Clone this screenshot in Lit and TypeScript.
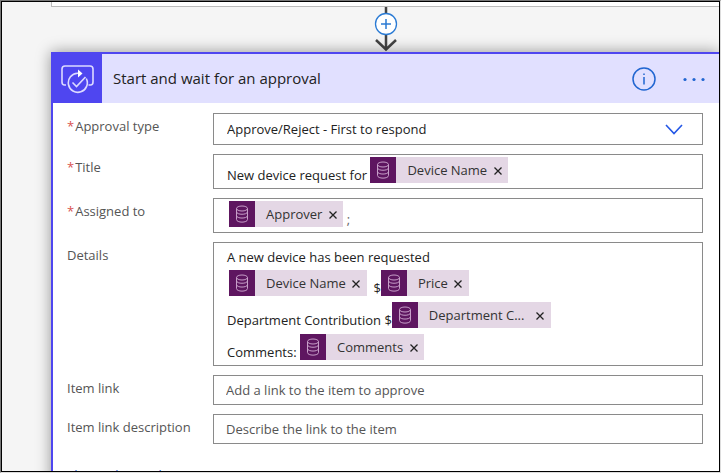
import { LitElement, html, css, svg } from "lit";
import { customElement, property } from "lit/decorators.js";

const database = svg`
  <ellipse cx="7" cy="3.5" rx="5.5" ry="2.5"></ellipse>
  <path d="M1.5 3.5V14.5C1.5 18 12.5 18 12.5 14.5V3.5"></path>
  <path d="M1.5 7C2 10 12 10 12.5 7M1.5 10.8C2 13.8 12 13.8 12.5 10.8"></path>`;

@customElement("field-token")
export class FieldToken extends LitElement {
  @property() label = "";
  @property({ type: Boolean }) clipped = false;

  static styles = css`
    :host {
      display: inline-flex;
      align-items: center;
      height: 26px;
      background: #e4d7e5;
      color: #333;
      vertical-align: top;
    }
    .badge {
      display: grid;
      place-items: center;
      width: 26px;
      height: 26px;
      background: #5e1660;
      margin-right: 11px;
    }
    .badge svg {
      width: 14px;
      height: 18px;
      fill: none;
      stroke: #c79fc9;
      stroke-width: 1;
    }
    .label {
      white-space: nowrap;
    }
    .label.clipped {
      width: 101px;
    }
    button {
      display: grid;
      place-items: center;
      width: 21px;
      height: 26px;
      padding: 0;
      border: 0;
      background: none;
    }
    button svg {
      width: 8px;
      height: 8px;
      margin-top: 2px;
      stroke: #222;
      stroke-width: 1.3;
    }
  `;

  render() {
    return html`
      <span class="badge"><svg viewBox="0 0 14 18">${database}</svg></span>
      <span class="label ${this.clipped ? "clipped" : ""}">${this.label}</span>
      <button aria-label="Remove ${this.label}">
        <svg viewBox="0 0 8 8"><path d="M0.5 0.5L7.5 7.5M7.5 0.5L0.5 7.5"></path></svg>
      </button>
    `;
  }
}

@customElement("app-root")
export class AppRoot extends LitElement {
  static styles = css`
    :host {
      display: block;
      box-sizing: border-box;
      height: 100vh;
      border: 1px solid #777;
      border-right-color: #ddd;
      border-bottom-color: #ddd;
      font: 13px/18px "Open Sans", "Noto Sans", sans-serif;
      color: #222;
    }
    * {
      box-sizing: border-box;
    }
    .frame {
      height: 100%;
      overflow: hidden;
      border: 1px solid #000;
      background: #f5f5f5;
      display: flex;
      flex-direction: column;
    }
    .previous {
      flex: none;
      height: 5px;
      margin-left: 49px;
      border: 1px solid #bbb;
      border-top: 0;
      border-right: 0;
      background: #fff;
    }
    .connector {
      flex: none;
      display: flex;
      justify-content: center;
      height: 45px;
      margin-left: 50px;
    }
    .connector button {
      width: 26px;
      height: 45px;
      padding: 0;
      border: 0;
      background: none;
    }
    .connector svg {
      display: block;
      width: 26px;
      height: 45px;
      fill: none;
    }
    .card {
      flex: none;
      margin-left: 49px;
      border: 2px solid #4f46f0;
      border-right: 0;
      border-bottom: 0;
      background: #fff;
      box-shadow: 0 0 14px rgba(0, 0, 0, 0.4);
    }
    .header {
      display: flex;
      align-items: center;
      height: 49px;
      padding-right: 12px;
      background: #e1e0ff;
    }
    .logo {
      display: grid;
      place-items: center;
      width: 49px;
      height: 49px;
      padding-right: 1px;
      background: #4f46f0;
    }
    .logo svg {
      width: 34px;
      height: 30px;
      fill: none;
      stroke: #dcdaff;
      stroke-width: 1.6;
    }
    h1 {
      flex: 1;
      margin: 0 0 2px 11px;
      font-size: 15px;
      line-height: 20px;
      font-weight: 400;
    }
    .icon {
      padding: 0;
      border: 0;
      background: none;
      display: grid;
      place-items: center;
      width: 26px;
      height: 26px;
    }
    .icon + .icon {
      margin-left: 24px;
    }
    .icon svg {
      width: 26px;
      height: 26px;
    }
    form {
      display: grid;
      grid-template-columns: 146px 1fr;
      row-gap: 9px;
      padding: 10px 16px 0 14px;
    }
    .name {
      padding-top: 4px;
      color: #555;
    }
    .required::before {
      content: "*";
      color: #d9534f;
      margin-right: 1px;
    }
    .box {
      min-width: 0;
      width: 100%;
      border: 1px solid #8a8a8a;
      background: #fff;
      padding: 0 13px;
    }
    .picker {
      position: relative;
    }
    select.box {
      display: block;
      height: 32px;
      appearance: none;
      border-radius: 0;
      font: inherit;
      color: inherit;
    }
    .picker svg {
      position: absolute;
      right: 20px;
      top: 11px;
      width: 18px;
      height: 11px;
      pointer-events: none;
    }
    .line {
      display: flex;
      align-items: flex-start;
    }
    .line > span {
      padding-top: 9px;
      white-space: pre;
    }
    .single {
      height: 35px;
      padding-top: 2px;
    }
    .details {
      height: 124px;
      padding-top: 5px;
    }
    .details .line {
      height: 32px;
    }
    .details .line.first {
      height: 22px;
    }
    .details .line.first > span {
      padding-top: 0;
    }
    .tail {
      color: #666;
    }
    .people {
      padding-left: 15px;
    }
    .indent {
      padding-left: 2px;
    }
    input.box {
      display: block;
      height: 30px;
      padding: 0 12px;
      border-radius: 0;
      font: inherit;
    }
    input.box::placeholder {
      color: #555;
      opacity: 1;
    }
    .more {
      display: block;
      margin: 22px 14px 0;
      color: #2a5bd7;
      text-decoration: none;
    }
  `;

  render() {
    return html`
      <main class="frame">
        <div class="previous"></div>
        <div class="connector">
          <button aria-label="Insert a new step">
            <svg viewBox="0 0 26 45">
              <path d="M13 0V42M3 33L13 42.5L23 33" stroke="#444" stroke-width="2.5"></path>
              <circle cx="13" cy="17" r="10.5" fill="#fff" stroke="#2b7bd4" stroke-width="1.3"></circle>
              <path d="M13 12V22M8 17H18" stroke="#2b7bd4" stroke-width="1.5"></path>
            </svg>
          </button>
        </div>
        <section class="card">
          <header class="header">
            <span class="logo">
              <svg viewBox="0 0 34 30">
                <path d="M6 21H4.5Q2 21 2 18V5Q2 2 5 2H30Q33 2 33 5V18Q33 21 30.5 21H28.5"></path>
                <path d="M19.5 9.3H17.5A9.5 9.5 0 1 0 26.3 14.5M12.5 18.5L16.5 22.5L25.5 13"></path>
                <path d="M18 5.5L22.5 9.5L18 13.5Z" fill="#fff" stroke="none"></path>
              </svg>
            </span>
            <h1>Start and wait for an approval</h1>
            <button class="icon" aria-label="Information">
              <svg viewBox="0 0 26 26" fill="none" stroke="#2166d1">
                <circle cx="13" cy="13" r="11" stroke-width="1.5"></circle>
                <path d="M13 11V18.5M13 7.5V9" stroke-width="1.5"></path>
              </svg>
            </button>
            <button class="icon" aria-label="More commands">
              <svg viewBox="0 0 26 26" fill="#2166d1">
                <circle cx="4" cy="13.5" r="1.6"></circle>
                <circle cx="13" cy="13.5" r="1.6"></circle>
                <circle cx="22" cy="13.5" r="1.6"></circle>
              </svg>
            </button>
          </header>
          <form>
            <label class="name required" for="type">Approval type</label>
            <div class="picker">
              <select class="box" id="type"><option>Approve/Reject - First to respond</option></select>
              <svg viewBox="0 0 18 11" fill="none" stroke="#2457e6" stroke-width="1.6"><path d="M1 1L9 9.5L17 1"></path></svg>
            </div>
            <span class="name required" id="title">Title</span>
            <div class="box single line" role="textbox" aria-labelledby="title">
              <span>New device request for </span><field-token label="Device Name"></field-token>
            </div>
            <span class="name required" id="assigned">Assigned to</span>
            <div class="box single line people" role="textbox" aria-labelledby="assigned">
              <field-token label="Approver"></field-token><span class="tail"> ;</span>
            </div>
            <span class="name" id="details">Details</span>
            <div class="box details" role="textbox" aria-labelledby="details" aria-multiline="true">
              <div class="line first"><span>A new device has been requested</span></div>
              <div class="line indent"><field-token label="Device Name"></field-token><span>  $</span><field-token label="Price"></field-token></div>
              <div class="line"><span>Department Contribution $</span><field-token clipped label="Department C..."></field-token></div>
              <div class="line"><span>Comments: </span><field-token label="Comments"></field-token></div>
            </div>
            <label class="name" for="link">Item link</label>
            <input class="box" id="link" placeholder="Add a link to the item to approve" />
            <label class="name" for="desc">Item link description</label>
            <input class="box" id="desc" placeholder="Describe the link to the item" />
          </form>
          <a class="more" href="#">Show advanced options</a>
        </section>
      </main>
    `;
  }
}
